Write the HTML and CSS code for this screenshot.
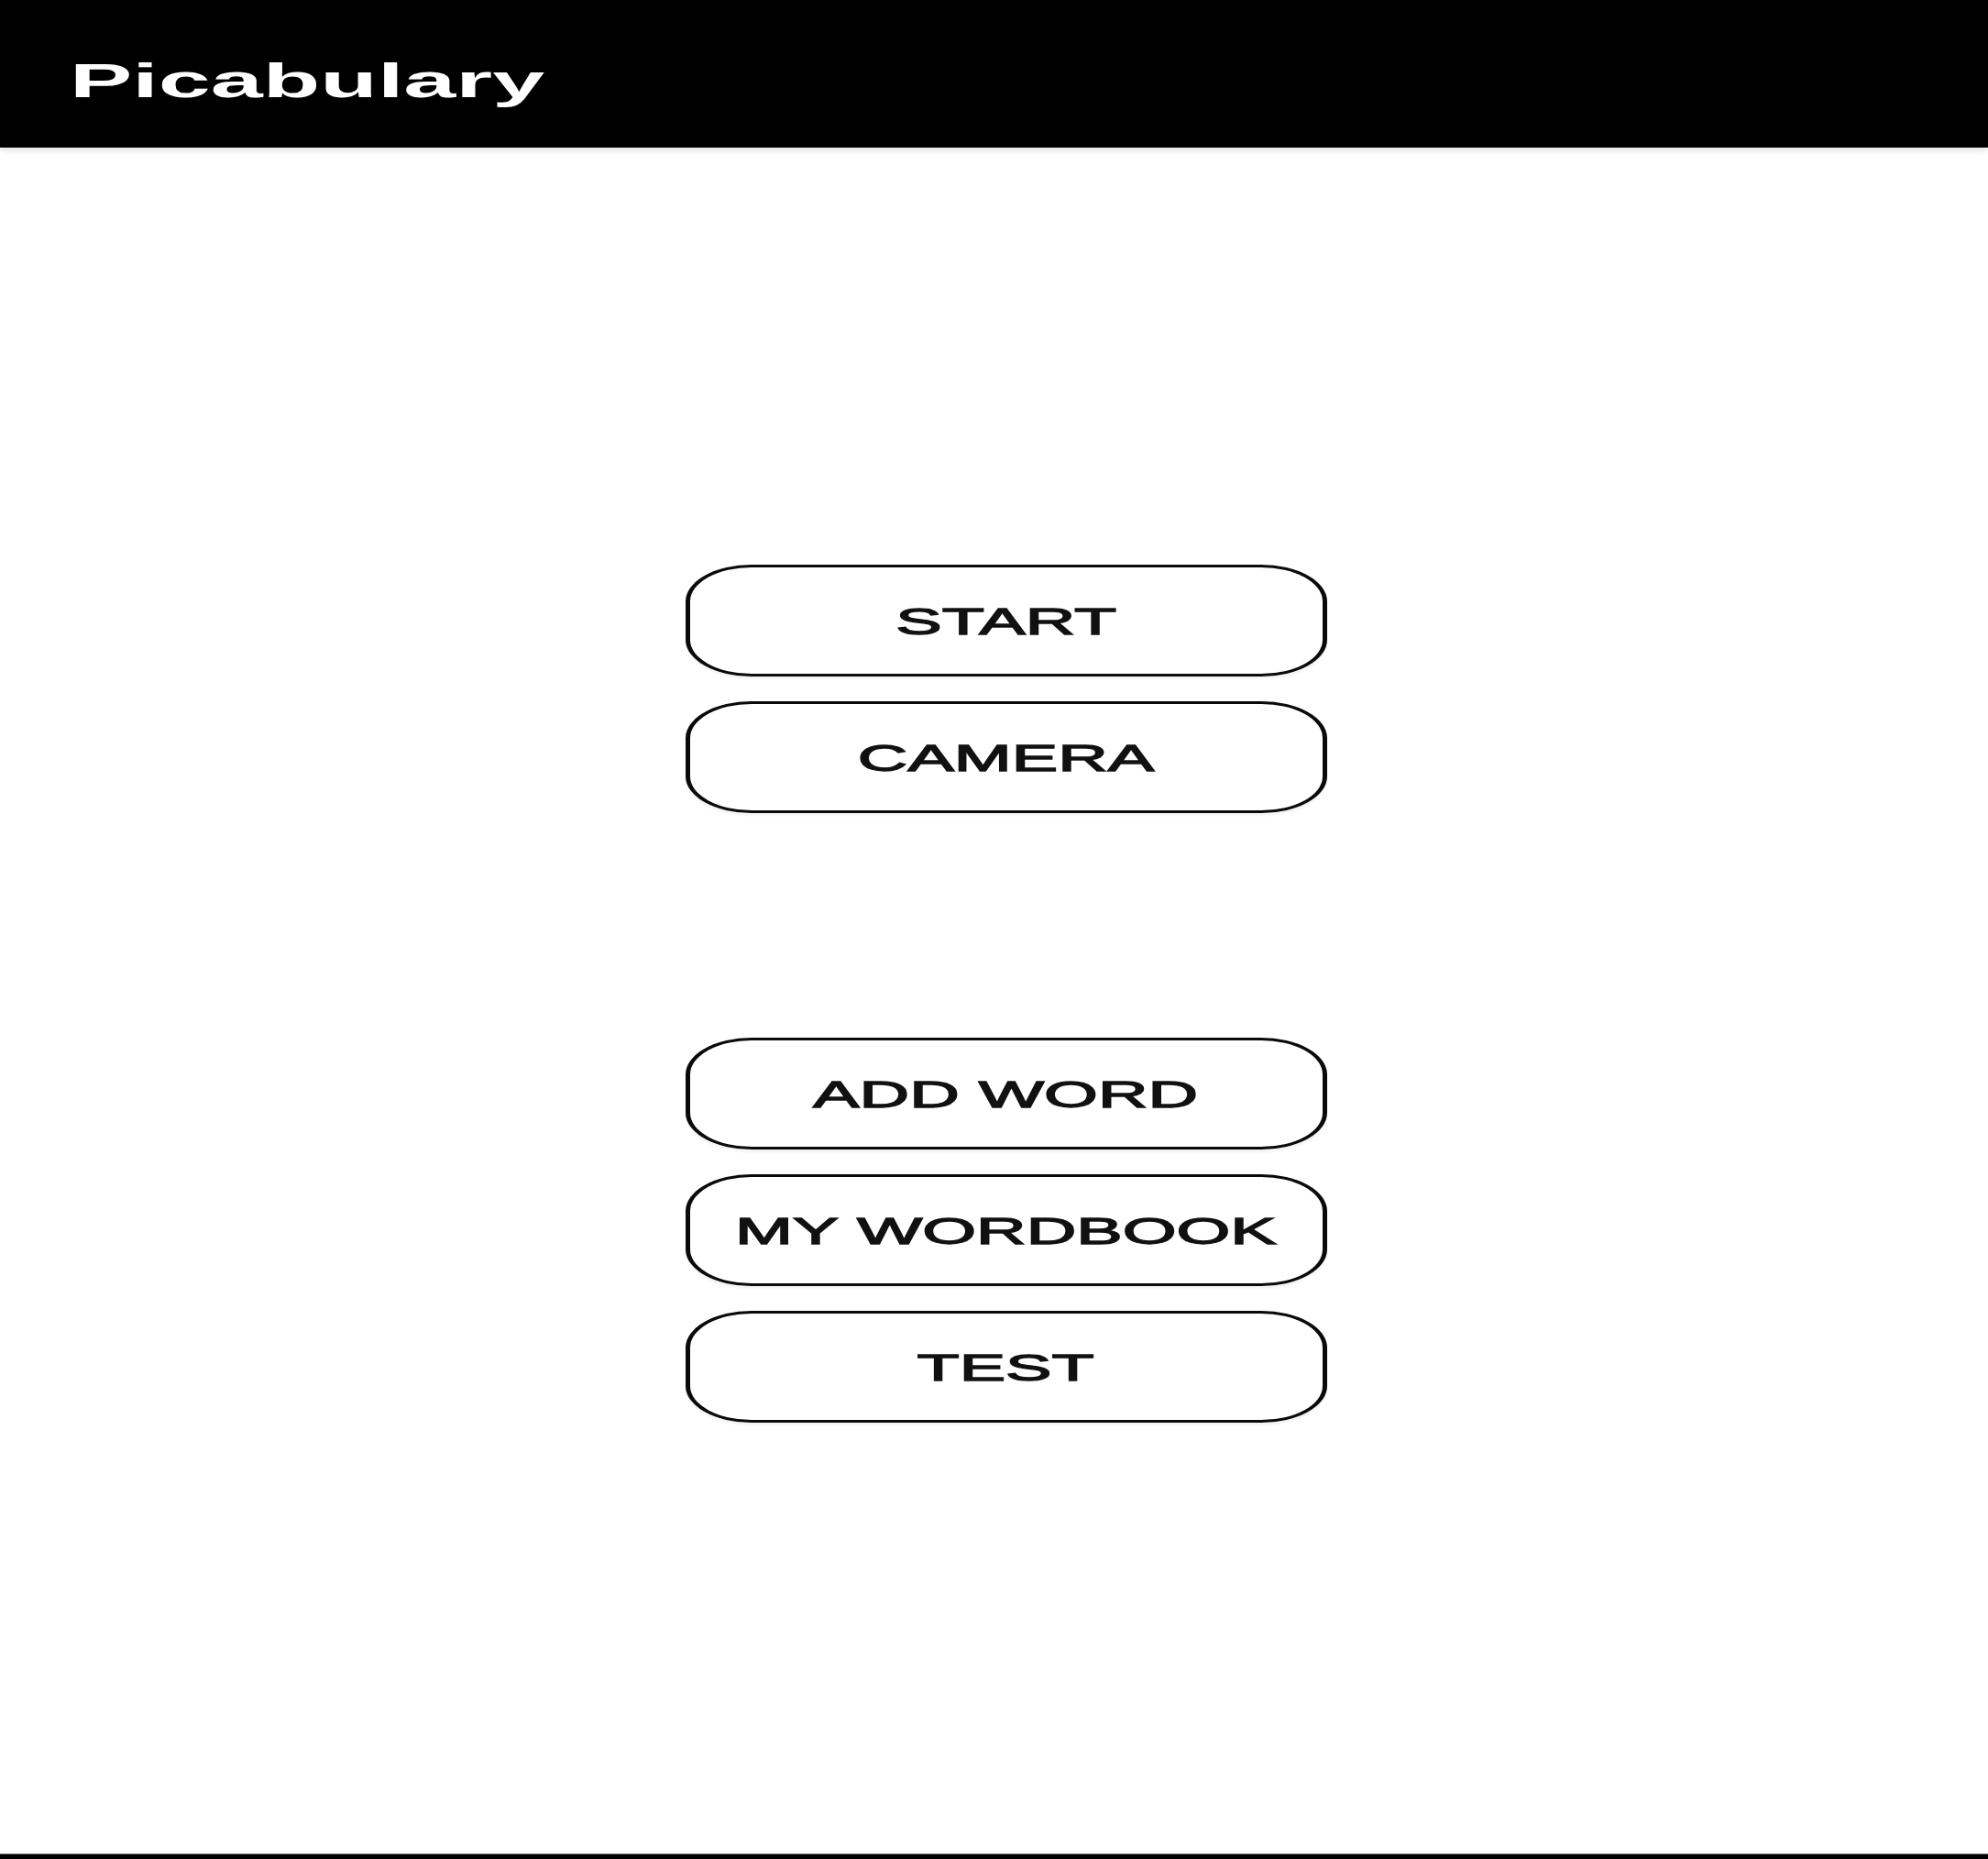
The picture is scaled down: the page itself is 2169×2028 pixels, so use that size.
FILE: index.html
```html
<!DOCTYPE html>
<html>
<head>
<meta charset="utf-8">
<title>Picabulary</title>
<link rel="stylesheet" href="styles.css">
</head>
<body>
<div class="app">
  <header class="appbar">
    <span class="title">Picabulary</span>
  </header>
  <main class="content">
    <div class="group">
      <button class="btn"><span class="label">START</span></button>
      <button class="btn"><span class="label">CAMERA</span></button>
    </div>
    <div class="group">
      <button class="btn"><span class="label">ADD WORD</span></button>
      <button class="btn"><span class="label">MY WORDBOOK</span></button>
      <button class="btn"><span class="label">TEST</span></button>
    </div>
  </main>
  <footer class="navline"></footer>
</div>
</body>
</html>
```

FILE: styles.css
```css
html, body {
  margin: 0;
  padding: 0;
  background: #ffffff;
}
.app {
  display: flex;
  flex-direction: column;
  height: 2028px;
  font-family: "Liberation Sans", Arial, sans-serif;
}
.appbar {
  height: 161px;
  flex: 0 0 161px;
  background: #000000;
  display: flex;
  align-items: center;
  padding-left: 76px;
  box-sizing: border-box;
  box-shadow: 0 3px 6px rgba(0,0,0,0.12);
  position: relative;
  z-index: 1;
}
.title {
  color: #ffffff;
  font-weight: bold;
  font-size: 52px;
  line-height: 1;
  display: inline-block;
  transform: scaleX(1.97);
  transform-origin: left center;
  margin-top: 14px;
}
.content {
  flex: 1 1 auto;
  display: flex;
  flex-direction: column;
  align-items: center;
  padding-top: 455px;
  padding-left: 26px;
  gap: 245px;
}
.group {
  display: flex;
  flex-direction: column;
  gap: 27px;
}
.btn {
  width: 700px;
  height: 122px;
  box-sizing: border-box;
  background: #ffffff;
  border-style: solid;
  border-color: #0a0a0a;
  border-width: 3px 5px;
  border-radius: 72px / 40px;
  display: flex;
  align-items: center;
  justify-content: center;
  padding: 0;
  box-shadow: 0 3px 3px rgba(0,0,0,0.05);
  font-family: "Liberation Sans", Arial, sans-serif;
}
.label {
  display: inline-block;
  font-size: 40px;
  font-weight: normal;
  color: #111111;
  -webkit-text-stroke: 1.3px #111111;
  line-height: 1;
  transform: scaleX(1.89);
  white-space: nowrap;
  margin-top: 2px;
}
.navline {
  flex: 0 0 5px;
  height: 5px;
  background: #000000;
  border-top: 1px solid #777777;
}
```
